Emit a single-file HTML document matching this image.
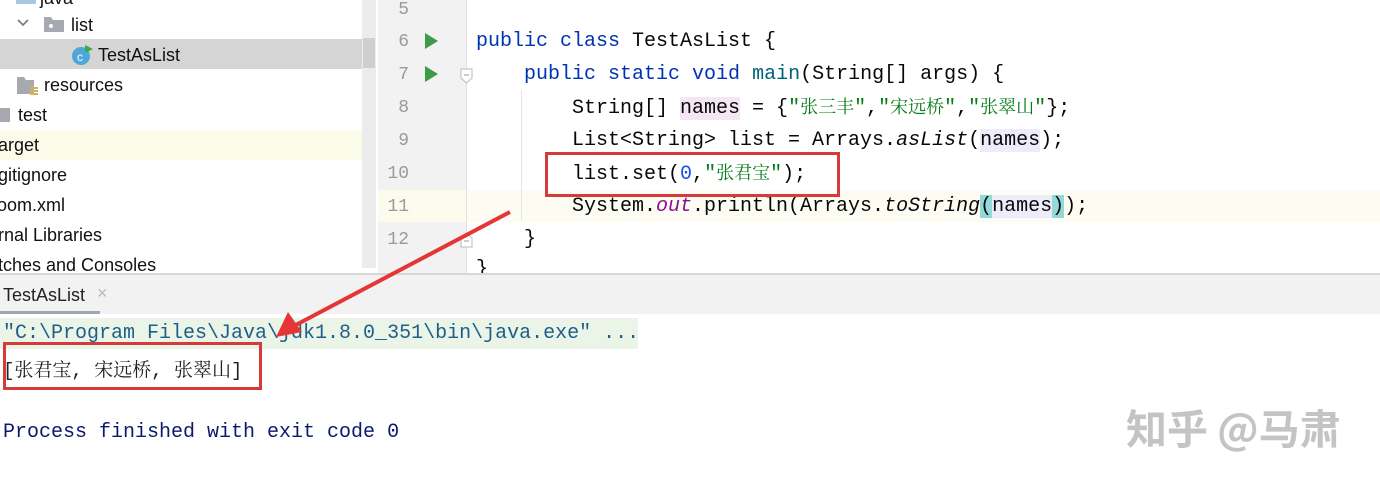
<!DOCTYPE html>
<html><head><meta charset="utf-8"><style>
*{margin:0;padding:0;box-sizing:border-box}
body{width:1380px;height:480px;overflow:hidden;background:#fff;position:relative;font-family:"Liberation Sans","Noto Sans CJK SC",sans-serif}
.a{position:absolute;white-space:pre}
.tree{font-size:18px;color:#111}
.mono{font-family:"Liberation Mono","Noto Sans CJK SC",monospace;font-size:20px;line-height:24px;color:#080808}
.ln{font-family:"Liberation Mono",monospace;font-size:18px;color:#9a9a9a;width:40px;text-align:right}
.kw{color:#0033b3}.str{color:#067d17}.cj{font-family:"Noto Serif CJK SC",serif;font-size:18px;line-height:20px}.num{color:#1750eb}.it{font-style:italic}.pu{color:#871094}
</style></head><body>
<!-- sidebar -->
<div class="a" style="left:0;top:39px;width:362px;height:30px;background:#d5d5d5"></div>
<div class="a" style="left:0;top:130px;width:362px;height:30px;background:#fbfbe9"></div>
<div class="a" style="left:362px;top:0;width:14px;height:268px;background:#ececec"></div>
<div class="a" style="left:363px;top:38px;width:12px;height:30px;background:#cfcfcf"></div>
<div class="a tree" style="left:40px;top:-12px">java</div>
<div class="a" style="left:16px;top:-6px;width:20px;height:10px;background:#a9c6e3"></div>
<svg class="a" style="left:16px;top:17px" width="14" height="12"><path d="M2 3 L7 8 L12 3" stroke="#777" stroke-width="1.6" fill="none"/></svg>
<svg class="a" style="left:43px;top:15px" width="22" height="18"><path d="M1 2h7l2 3h11v12H1z" fill="#a6aab0"/><circle cx="8" cy="11" r="2" fill="#fff"/></svg>
<div class="a tree" style="left:71px;top:15px">list</div>
<svg class="a" style="left:70px;top:43px" width="24" height="24"><circle cx="11" cy="13" r="9" fill="#4fa6d9"/><text x="7" y="18" font-size="12" fill="#fff" font-family="Liberation Sans">c</text><path d="M15 2 L23 6 L15 10z" fill="#3ca848"/></svg>
<div class="a tree" style="left:98px;top:45px">TestAsList</div>
<svg class="a" style="left:16px;top:75px" width="24" height="22"><path d="M1 2h7l2 3h8v14H1z" fill="#a6aab0"/><rect x="14" y="12" width="8" height="2" fill="#d6b35a"/><rect x="14" y="15" width="8" height="2" fill="#d6b35a"/><rect x="14" y="18" width="8" height="2" fill="#d6b35a"/></svg>
<div class="a tree" style="left:44px;top:75px">resources</div>
<div class="a" style="left:0;top:108px;width:10px;height:14px;background:#a6aab0"></div>
<div class="a tree" style="left:18px;top:105px">test</div>
<div class="a tree" style="left:-2px;top:135px">arget</div>
<div class="a tree" style="left:-2px;top:165px">gitignore</div>
<div class="a tree" style="left:-3px;top:195px">oom.xml</div>
<div class="a tree" style="left:-2px;top:225px">rnal Libraries</div>
<div class="a tree" style="left:-2px;top:255px">tches and Consoles</div>
<!-- gutter -->
<div class="a" style="left:378px;top:0;width:88px;height:275px;background:#f2f2f2"></div>
<div class="a" style="left:378px;top:190px;width:88px;height:32px;background:#fbfbee"></div>
<div class="a" style="left:466px;top:0;width:1px;height:275px;background:#e2e2e2"></div>
<div class="a" style="left:467px;top:190px;width:913px;height:32px;background:#fcfcf2"></div>
<div class="a ln" style="left:369px;top:0px">5</div>
<div class="a ln" style="left:369px;top:32px">6</div>
<div class="a ln" style="left:369px;top:65px">7</div>
<div class="a ln" style="left:369px;top:98px">8</div>
<div class="a ln" style="left:369px;top:131px">9</div>
<div class="a ln" style="left:369px;top:164px">10</div>
<div class="a ln" style="left:369px;top:197px">11</div>
<div class="a ln" style="left:369px;top:230px">12</div>
<svg class="a" style="left:425px;top:33px" width="14" height="18"><path d="M0 0L13 8L0 16z" fill="#3d9b48"/></svg>
<svg class="a" style="left:425px;top:66px" width="14" height="18"><path d="M0 0L13 8L0 16z" fill="#3d9b48"/></svg>
<svg class="a" style="left:460px;top:68px" width="14" height="16"><path d="M1 1h11v9l-5.5 5L1 10z" fill="#fff" stroke="#bbb"/><path d="M4 7h5" stroke="#999"/></svg>
<svg class="a" style="left:460px;top:232px" width="14" height="16"><path d="M1 15h11V6L6.5 1 1 6z" fill="#fff" stroke="#bbb"/><path d="M4 9h5" stroke="#999"/></svg>
<div class="a" style="left:521px;top:90px;width:1px;height:130px;background:#e4e4e4"></div>
<!-- code -->
<div class="a mono" style="left:476px;top:30px"><span class="kw">public class</span> TestAsList {</div>
<div class="a mono" style="left:524px;top:63px"><span class="kw">public static void</span> <span style="color:#00627a">main</span>(String[] args) {</div>
<div class="a mono" style="left:572px;top:96px">String[] <span style="background:#f5e6f5">names</span> = {<span class="str">"<span class="cj">张三丰</span>"</span>,<span class="str">"<span class="cj">宋远桥</span>"</span>,<span class="str">"<span class="cj">张翠山</span>"</span>};</div>
<div class="a mono" style="left:572px;top:129px">List&lt;String&gt; list = Arrays.<span class="it">asList</span>(<span style="background:#ececfb">names</span>);</div>
<div class="a mono" style="left:572px;top:162px">list.set(<span class="num">0</span>,<span class="str">"<span class="cj">张君宝</span>"</span>);</div>
<div class="a mono" style="left:572px;top:195px">System.<span class="pu it">out</span>.println(Arrays.<span class="it">toString</span><span style="background:#93d9d9">(</span><span style="background:#ececfb">names</span><span style="background:#93d9d9">)</span>);</div>
<div class="a mono" style="left:524px;top:228px">}</div>
<div class="a mono" style="left:476px;top:258px">}</div>
<div class="a" style="left:545px;top:152px;width:295px;height:45px;border:3px solid #d63b3b"></div>
<!-- bottom panel -->
<div class="a" style="left:0;top:273px;width:1380px;height:2px;background:#d8d8d8"></div>
<div class="a" style="left:0;top:275px;width:1380px;height:39px;background:#f2f2f2"></div>
<div class="a" style="left:0;top:311px;width:100px;height:3px;background:#a0a6ad"></div>
<div class="a tree" style="left:3px;top:285px;color:#222">TestAsList</div>
<div class="a" style="left:97px;top:283px;font-size:18px;color:#bbb">×</div>
<div class="a" style="left:0;top:318px;width:638px;height:31px;background:#eaf5e8"></div>
<div class="a mono" style="left:3px;top:322px;color:#1f5e8a">"C:\Program Files\Java\jdk1.8.0_351\bin\java.exe" ...</div>
<div class="a" style="left:3px;top:355px;font-family:'Liberation Mono','Noto Serif CJK SC',serif;font-size:19px;color:#222">[张君宝, 宋远桥, 张翠山]</div>
<div class="a" style="left:3px;top:342px;width:259px;height:48px;border:3px solid #d63b3b"></div>
<div class="a mono" style="left:3px;top:421px;color:#0b1a6e">Process finished with exit code 0</div>
<!-- arrow -->
<svg class="a" style="left:0;top:0" width="1380" height="480"><path d="M510 212 L292 327" stroke="#e53535" stroke-width="4"/><path d="M276 337 L288 312 L302 332z" fill="#e53535"/></svg>
<!-- watermark -->
<div class="a" style="left:1126px;top:396px;font-size:41px;color:#c4c4c4;font-family:'Noto Sans CJK SC',sans-serif;font-weight:bold">知乎 @马肃</div>
</body></html>
